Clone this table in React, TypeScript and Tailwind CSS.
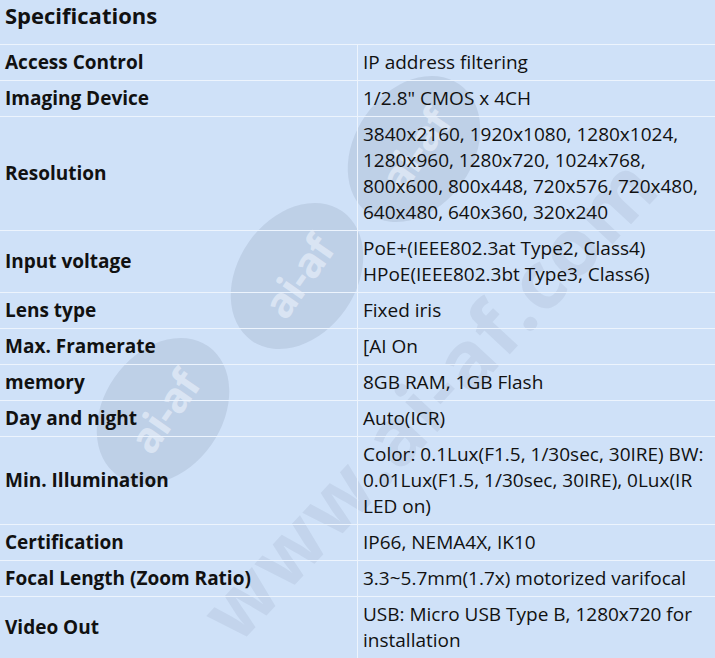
const specs: { label: string; value: string[] }[] = [
  { label: "Access Control", value: ["IP address filtering"] },
  { label: "Imaging Device", value: ['1/2.8" CMOS x 4CH'] },
  {
    label: "Resolution",
    value: [
      "3840x2160, 1920x1080, 1280x1024,",
      "1280x960, 1280x720, 1024x768,",
      "800x600, 800x448, 720x576, 720x480,",
      "640x480, 640x360, 320x240",
    ],
  },
  {
    label: "Input voltage",
    value: ["PoE+(IEEE802.3at Type2, Class4)", "HPoE(IEEE802.3bt Type3, Class6)"],
  },
  { label: "Lens type", value: ["Fixed iris"] },
  { label: "Max. Framerate", value: ["[AI On"] },
  { label: "memory", value: ["8GB RAM, 1GB Flash"] },
  { label: "Day and night", value: ["Auto(ICR)"] },
  {
    label: "Min. Illumination",
    value: [
      "Color: 0.1Lux(F1.5, 1/30sec, 30IRE) BW:",
      "0.01Lux(F1.5, 1/30sec, 30IRE), 0Lux(IR",
      "LED on)",
    ],
  },
  { label: "Certification", value: ["IP66, NEMA4X, IK10"] },
  { label: "Focal Length (Zoom Ratio)", value: ["3.3~5.7mm(1.7x) motorized varifocal"] },
  { label: "Video Out", value: ["USB: Micro USB Type B, 1280x720 for", "installation"] },
];

// faint site watermark: logo ovals along a diagonal plus the url
function Watermark() {
  const ovals = [
    { left: 335, top: 90 },
    { left: 218, top: 217 },
    { left: 84, top: 352 },
  ];
  return (
    <div className="pointer-events-none absolute inset-0 overflow-hidden">
      {ovals.map((o, i) => (
        <div
          key={i}
          className="absolute flex h-[118px] w-[158px] -rotate-[55deg] items-center justify-center rounded-[50%] bg-[#7d8ea6]/20"
          style={{ left: o.left, top: o.top }}
        >
          <span className="text-[42px] font-bold tracking-tight text-[#e6eef9]/70">ai-af</span>
        </div>
      ))}
      <div className="absolute left-[215px] top-[565px] origin-left -rotate-[47deg] whitespace-nowrap text-[80px] font-bold tracking-wide text-[#7d8ea6]/15">
        www.ai-af.com
      </div>
    </div>
  );
}

export default function App() {
  return (
    <div
      className="relative h-[658px] w-[715px] overflow-hidden bg-[#cfe1f8] text-[19px] text-[#111]"
      style={{ fontFamily: '"Open Sans", "Noto Sans", sans-serif' }}
    >
      <Watermark />
      <div className="relative">
        <div className="h-[45px] border-b border-[#edf4fd] px-[5px] text-[22px] font-bold leading-[30px]">
          Specifications
        </div>
        {specs.map((row) => (
          <div key={row.label} className="grid grid-cols-[358px_1fr] border-b border-[#edf4fd]">
            <div className="flex items-center border-r border-[#edf4fd] px-[5px] pb-[5px] pt-[4px] font-bold leading-[26px]">
              {row.label}
            </div>
            <div className="pb-[5px] pl-[5px] pt-[4px] leading-[26px]">
              {row.value.map((line) => (
                <div key={line} className="whitespace-nowrap">
                  {line}
                </div>
              ))}
            </div>
          </div>
        ))}
      </div>
    </div>
  );
}
